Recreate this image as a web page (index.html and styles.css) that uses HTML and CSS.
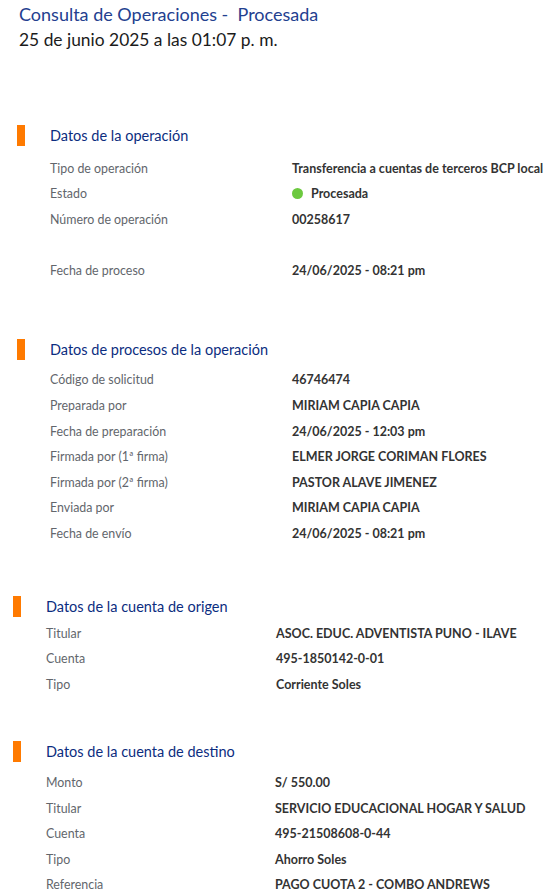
FILE: index.html
```html
<!DOCTYPE html>
<html lang="es">
<head>
    <meta charset="UTF-8">
    <meta name="viewport" content="width=device-width, initial-scale=1.0">
    <title>Consulta de Operaciones</title>
    <link rel="stylesheet" href="styles.css">
</head>
<body>
    <div class="page">
        <header class="page-head">
            <h1>Consulta de Operaciones -&nbsp; Procesada</h1>
            <p class="date">25 de junio 2025 a las 01:07 p. m.</p>
        </header>

        <section class="section section-ops">
            <div class="section-title"><span class="marker"></span><h2>Datos de la operación</h2></div>
            <dl class="rows">
                <dt>Tipo de operación</dt><dd>Transferencia a cuentas de terceros BCP local</dd>
                <dt>Estado</dt><dd><span class="dot"></span>Procesada</dd>
                <dt>Número de operación</dt><dd>00258617</dd>
                <dt></dt><dd></dd>
                <dt>Fecha de proceso</dt><dd>24/06/2025 - 08:21 pm</dd>
            </dl>
        </section>

        <section class="section section-process">
            <div class="section-title"><span class="marker"></span><h2>Datos de procesos de la operación</h2></div>
            <dl class="rows">
                <dt>Código de solicitud</dt><dd>46746474</dd>
                <dt>Preparada por</dt><dd>MIRIAM CAPIA CAPIA</dd>
                <dt>Fecha de preparación</dt><dd>24/06/2025 - 12:03 pm</dd>
                <dt>Firmada por (1ª firma)</dt><dd>ELMER JORGE CORIMAN FLORES</dd>
                <dt>Firmada por (2ª firma)</dt><dd>PASTOR ALAVE JIMENEZ</dd>
                <dt>Enviada por</dt><dd>MIRIAM CAPIA CAPIA</dd>
                <dt>Fecha de envío</dt><dd>24/06/2025 - 08:21 pm</dd>
            </dl>
        </section>

        <section class="section section-origin narrow">
            <div class="section-title"><span class="marker"></span><h2>Datos de la cuenta de origen</h2></div>
            <dl class="rows">
                <dt>Titular</dt><dd>ASOC. EDUC. ADVENTISTA PUNO - ILAVE</dd>
                <dt>Cuenta</dt><dd>495-1850142-0-01</dd>
                <dt>Tipo</dt><dd>Corriente Soles</dd>
            </dl>
        </section>

        <section class="section section-dest narrow">
            <div class="section-title"><span class="marker"></span><h2>Datos de la cuenta de destino</h2></div>
            <dl class="rows">
                <dt>Monto</dt><dd>S/ 550.00</dd>
                <dt>Titular</dt><dd>SERVICIO EDUCACIONAL HOGAR Y SALUD</dd>
                <dt>Cuenta</dt><dd>495-21508608-0-44</dd>
                <dt>Tipo</dt><dd>Ahorro Soles</dd>
                <dt>Referencia</dt><dd>PAGO CUOTA 2 - COMBO ANDREWS</dd>
            </dl>
        </section>
    </div>
</body>
</html>
```

FILE: styles.css
```css
body {
    margin: 0;
    padding: 0;
    background-color: #ffffff;
    font-family: Lato, "Noto Sans", sans-serif;
    color: #2b2b2b;
}

.page {
    padding-top: 1px;
}

.page-head {
    padding-left: 19px;
}

h1 {
    margin: 0;
    font-size: 18px;
    line-height: 26px;
    font-weight: 400;
    color: #23408f;
}

.date {
    margin: 0;
    font-size: 17.4px;
    line-height: 26px;
    color: #1b1b1b;
}

.section-title {
    display: flex;
    align-items: center;
    height: 22px;
    padding-left: 17px;
}

.marker {
    width: 8px;
    height: 21px;
    background-color: #ff7a00;
    margin-right: 25px;
}

h2 {
    margin: 0;
    font-size: 14.5px;
    font-weight: 400;
    color: #0b2d80;
}

.rows {
    display: grid;
    grid-template-columns: 242px 1fr;
    margin: 9.5px 0 0 0;
    padding-left: 50px;
    font-size: 12.4px;
    line-height: 25.6px;
}

.rows dt {
    color: #62666c;
    min-height: 25.6px;
}

.rows dd {
    margin: 0;
    font-size: 12.5px;
    font-weight: 700;
    color: #333333;
    white-space: nowrap;
    display: flex;
    align-items: center;
    min-height: 25.6px;
}

.dot {
    width: 11px;
    height: 11px;
    border-radius: 50%;
    background-color: #6cc93f;
    margin-right: 8px;
}

.section-ops {
    margin-top: 71px;
}

.section-process {
    margin-top: 55px;
}

.section-process .rows {
    margin-top: 7px;
}

.narrow .section-title {
    padding-left: 13px;
}

.narrow .rows {
    padding-left: 46px;
    grid-template-columns: 230px 1fr;
}

.section-origin {
    margin-top: 49px;
}

.section-origin .rows {
    margin-top: 3px;
}

.section-dest {
    margin-top: 43px;
}

.section-dest .rows {
    margin-top: 7.5px;
    grid-template-columns: 229px 1fr;
}
```
